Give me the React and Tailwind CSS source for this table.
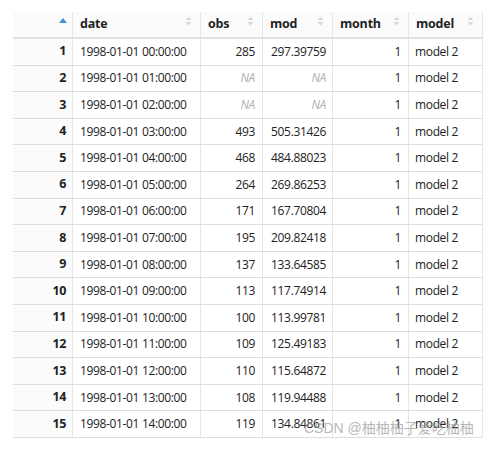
import React from "react";

const rows = [
  [1, "1998-01-01 00:00:00", "285", "297.39759"],
  [2, "1998-01-01 01:00:00", null, null],
  [3, "1998-01-01 02:00:00", null, null],
  [4, "1998-01-01 03:00:00", "493", "505.31426"],
  [5, "1998-01-01 04:00:00", "468", "484.88023"],
  [6, "1998-01-01 05:00:00", "264", "269.86253"],
  [7, "1998-01-01 06:00:00", "171", "167.70804"],
  [8, "1998-01-01 07:00:00", "195", "209.82418"],
  [9, "1998-01-01 08:00:00", "137", "133.64585"],
  [10, "1998-01-01 09:00:00", "113", "117.74914"],
  [11, "1998-01-01 10:00:00", "100", "113.99781"],
  [12, "1998-01-01 11:00:00", "109", "125.49183"],
  [13, "1998-01-01 12:00:00", "110", "115.64872"],
  [14, "1998-01-01 13:00:00", "108", "119.94488"],
  [15, "1998-01-01 14:00:00", "119", "134.84861"],
];

const SortIcon = () => (
  <svg width="7" height="10" viewBox="0 0 7 10" className="absolute right-[8px] top-[4px]">
    <path d="M3.5 0.5 L6.5 4 L0.5 4 Z" fill="#d8d8d8" />
    <path d="M3.5 9.5 L6.5 6 L0.5 6 Z" fill="#d8d8d8" />
  </svg>
);

const cols = "grid grid-cols-[60px_128px_62px_70px_76px_74px]";

const NA = () => <span className="italic text-[#b0b0b0]">NA</span>;

export default function App() {
  return (
    <div
      className="relative w-[500px] h-[453px] bg-white pl-[13px] pt-[12px] text-[#222]"
      style={{ fontFamily: '"Open Sans", "Noto Sans", sans-serif' }}
    >
      <div className="w-[470px] text-[12px] tracking-[-0.35px]">
        <div className={`${cols} h-[27px] border-b-2 border-[#e2e2e2] bg-[#fbfbfc] font-bold text-[12.5px] tracking-[-0.2px]`}>
          <div className="relative border-r border-[#e6e6e6]">
            <svg width="8" height="5" viewBox="0 0 8 5" className="absolute right-[5px] top-[6px]">
              <path d="M4 0 L8 5 L0 5 Z" fill="#3d8fd6" />
            </svg>
          </div>
          {["date", "obs", "mod", "month", "model"].map((h) => (
            <div key={h} className="relative flex items-center pl-[7px] border-r border-[#e6e6e6]">
              {h}
              <SortIcon />
            </div>
          ))}
        </div>
        {rows.map(([n, d, o, m]) => (
          <div key={n} className={`${cols} h-[26.6px] border-b border-[#dedede]`}>
            <div className="flex items-center justify-end pr-[6px] font-bold text-[12.5px] bg-[#fbfbfc] border-r border-[#e6e6e6]">{n}</div>
            <div className="flex items-center pl-[7px] border-r border-[#e6e6e6]">{d}</div>
            <div className="flex items-center justify-end pr-[7px] border-r border-[#e6e6e6]">{o ?? <NA />}</div>
            <div className="flex items-center justify-end pr-[6px] border-r border-[#e6e6e6]">{m ?? <NA />}</div>
            <div className="flex items-center justify-end pr-[7px] border-r border-[#e6e6e6]">1</div>
            <div className="flex items-center pl-[6px] border-r border-[#e6e6e6]">model 2</div>
          </div>
        ))}
      </div>
      <div
        className="absolute left-[304px] top-[418px] text-[14px] text-[#9a9a9a] opacity-70 whitespace-nowrap"
        style={{ fontFamily: '"Liberation Sans", "Noto Sans CJK SC", sans-serif' }}
      >
        CSDN @柚柚柚子爱吃柚柚
      </div>
    </div>
  );
}
